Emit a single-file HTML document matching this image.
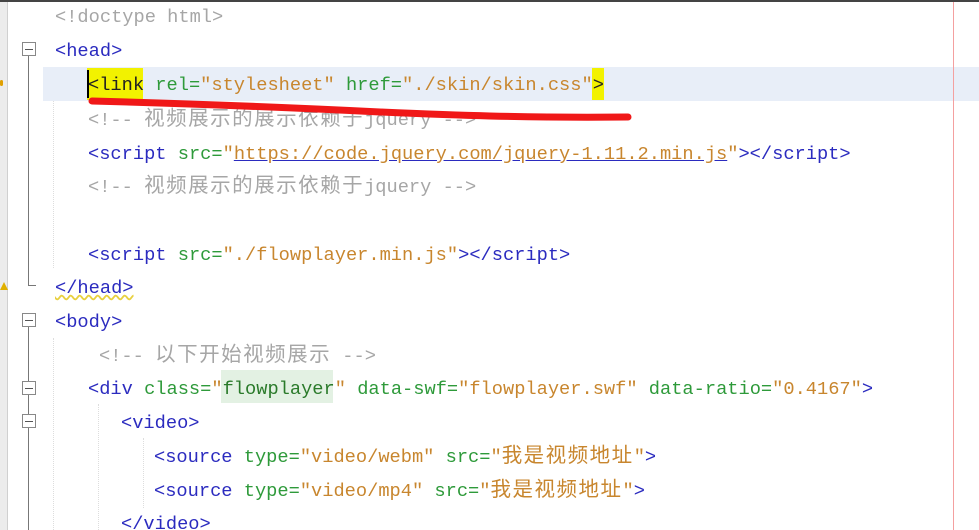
<!DOCTYPE html>
<html><head><meta charset="utf-8">
<style>
html,body{margin:0;padding:0;background:#fff;width:979px;height:530px;overflow:hidden;position:relative}
.l{position:absolute;white-space:pre;font-family:"Liberation Mono","Noto Sans CJK SC",monospace;font-size:18.7px;line-height:34px;height:34px;margin-top:2px}
.t{color:#2b2bbf}.a{color:#2e9a3a}.s{color:#c8862e}.c{color:#a6a6a6}.k{color:#222}
.z{font-family:"Noto Sans CJK SC",sans-serif;font-size:20.5px;letter-spacing:1.5px;line-height:20px}
.fb{position:absolute;left:22px;width:12px;height:12px;border:1px solid #888;background:#fff}
.fb:after{content:"";position:absolute;left:2px;right:2px;top:5.5px;height:1px;background:#555}
.vl{position:absolute;left:28px;width:1px;background:#777}
.g{position:absolute;border-left:1px dotted #ddd;width:0}
</style></head><body>
<div style="position:absolute;left:0;top:0;width:979px;height:2px;background:#444"></div>
<div style="position:absolute;left:0;top:2px;width:7px;height:528px;background:#ececec;border-right:1px solid #d0d0d0"></div>
<div style="position:absolute;left:43px;top:67px;width:936px;height:34px;background:#e8eef8"></div>
<div style="position:absolute;left:953px;top:2px;width:1px;height:528px;background:#f4a0a0"></div>
<div style="position:absolute;left:87px;top:68px;width:56px;height:32px;background:#f2f200"></div>
<div style="position:absolute;left:592px;top:68px;width:12px;height:32px;background:#f2f200"></div>
<div style="position:absolute;left:87px;top:70px;width:2px;height:28px;background:#000"></div>
<div style="position:absolute;left:221px;top:370px;width:112px;height:33px;background:#e3f1e3"></div>
<div class="g" style="left:53px;top:101px;height:167px"></div>
<div class="g" style="left:53px;top:338px;height:192px"></div>
<div class="g" style="left:98px;top:404px;height:126px"></div>
<div class="g" style="left:143px;top:438px;height:70px"></div>

<div class="fb" style="top:42px"></div>
<div class="vl" style="top:56px;height:230px"></div>
<div style="position:absolute;left:28px;top:285px;width:8px;height:1px;background:#777"></div>
<div class="fb" style="top:313px"></div>
<div class="vl" style="top:327px;height:203px"></div>
<div class="fb" style="top:381px"></div>
<div class="fb" style="top:414px"></div>
<div style="position:absolute;left:0;top:282px;width:0;height:0;border-left:4px solid transparent;border-right:4px solid transparent;border-bottom:8px solid #e0b000"></div>
<div style="position:absolute;left:0;top:80px;width:3px;height:6px;background:#e0a000;border-radius:2px"></div>

<div class="l c" style="left:55px;top:-2px">&lt;!doctype html&gt;</div>
<div class="l t" style="left:55px;top:32px">&lt;head&gt;</div>
<div class="l" style="left:88px;top:66px"><span class="k">&lt;link</span> <span class="a">rel=</span><span class="s">"stylesheet"</span> <span class="a">href=</span><span class="s">"./skin/skin.css"</span><span class="k">&gt;</span></div>
<div class="l c" style="left:88px;top:101px">&lt;!-- <span class="z">视频展示的展示依赖于</span>jquery --&gt;</div>
<div class="l" style="left:88px;top:135px"><span class="t">&lt;script</span> <span class="a">src=</span><span class="s">"<span style="text-decoration:underline;text-decoration-color:#2b2bbf">https://code.jquery.com/jquery-1.11.2.min.js</span>"</span><span class="t">&gt;&lt;/script&gt;</span></div>
<div class="l c" style="left:88px;top:168px">&lt;!-- <span class="z">视频展示的展示依赖于</span>jquery --&gt;</div>
<div class="l" style="left:88px;top:236px"><span class="t">&lt;script</span> <span class="a">src=</span><span class="s">"./flowplayer.min.js"</span><span class="t">&gt;&lt;/script&gt;</span></div>
<div class="l t" style="left:55px;top:269px;text-decoration:underline wavy #e8d040">&lt;/head&gt;</div>
<div class="l t" style="left:55px;top:303px">&lt;body&gt;</div>
<div class="l c" style="left:99px;top:337px">&lt;!-- <span class="z">以下开始视频展示</span> --&gt;</div>
<div class="l" style="left:88px;top:370px"><span class="t">&lt;div</span> <span class="a">class=</span><span class="s">"<span style="color:#2a7a2a">flowplayer</span>"</span> <span class="a">data-swf=</span><span class="s">"flowplayer.swf"</span> <span class="a">data-ratio=</span><span class="s">"0.4167"</span><span class="t">&gt;</span></div>
<div class="l t" style="left:121px;top:404px">&lt;video&gt;</div>
<div class="l" style="left:154px;top:438px"><span class="t">&lt;source</span> <span class="a">type=</span><span class="s">"video/webm"</span> <span class="a">src=</span><span class="s">"<span class="z">我是视频地址</span>"</span><span class="t">&gt;</span></div>
<div class="l" style="left:154px;top:472px"><span class="t">&lt;source</span> <span class="a">type=</span><span class="s">"video/mp4"</span> <span class="a">src=</span><span class="s">"<span class="z">我是视频地址</span>"</span><span class="t">&gt;</span></div>
<div class="l t" style="left:121px;top:505px">&lt;/video&gt;</div>

<svg style="position:absolute;left:0;top:0" width="979" height="530">
<path d="M92 101 C200 104 300 108 380 112 C450 115 520 118 628 117" stroke="#f01818" stroke-width="7" fill="none" stroke-linecap="round"/>
</svg>
</body></html>
